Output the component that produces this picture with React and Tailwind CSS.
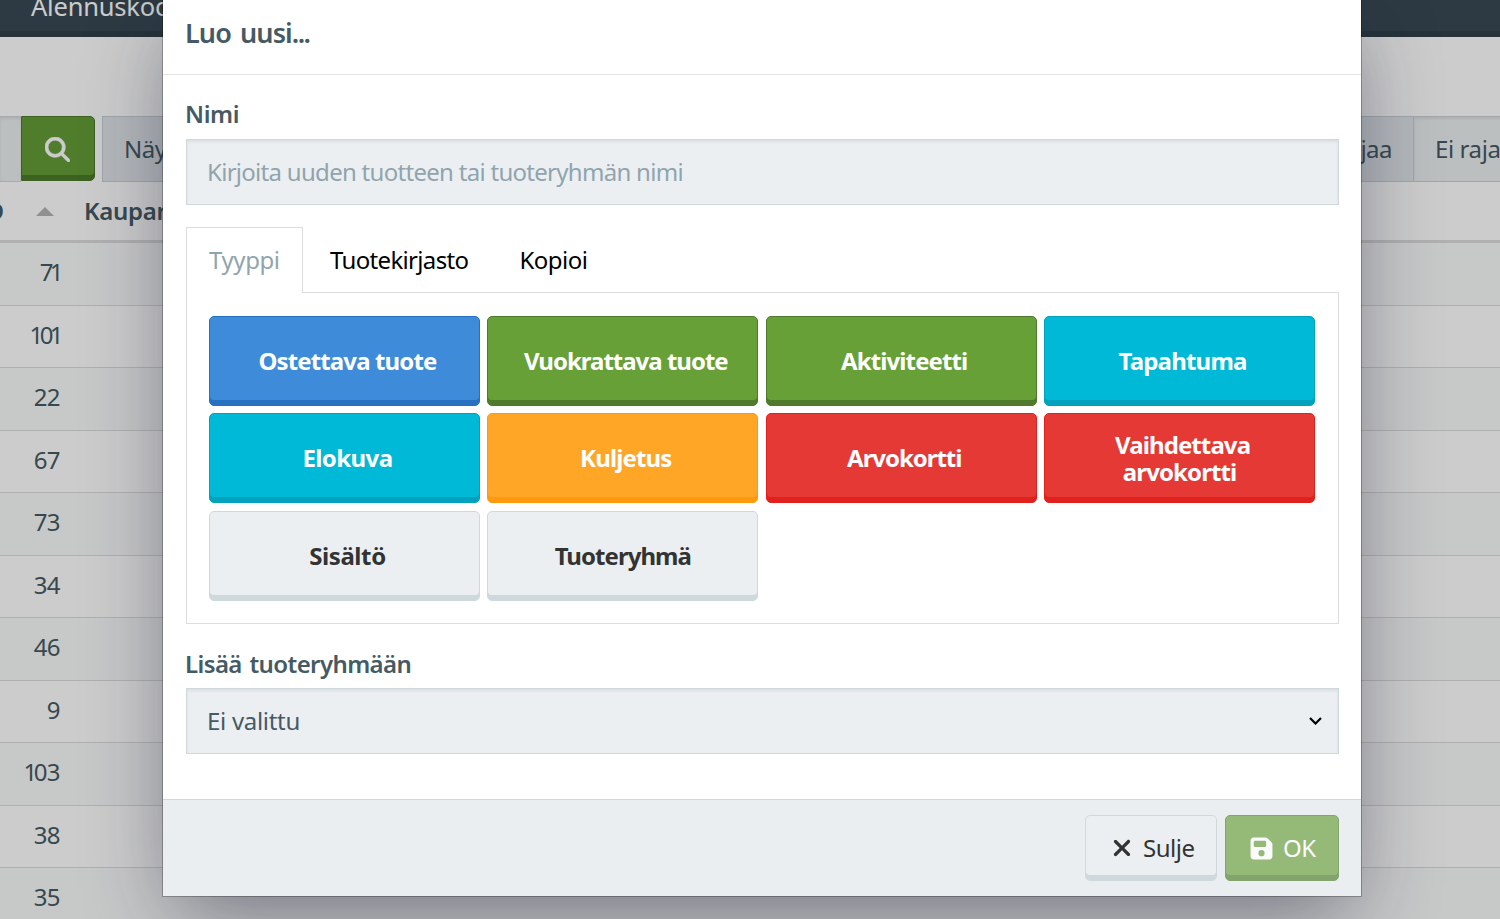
import React from "react";
import { FaMagnifyingGlass, FaFloppyDisk, FaXmark } from "react-icons/fa6";

const rows = [71, 101, 22, 67, 73, 34, 46, 9, 103, 38, 35];

const tones = {
  blue: "bg-[#3d8bd9] border-[#2672c0] shadow-[inset_0_-5px_0_#2672c0] text-white",
  green: "bg-[#68a038] border-[#4f7a2b] shadow-[inset_0_-5px_0_#4f7a2b] text-white",
  cyan: "bg-[#00b9d6] border-[#00a2bd] shadow-[inset_0_-5px_0_#00a2bd] text-white",
  orange: "bg-[#ffa627] border-[#ff9a0e] shadow-[inset_0_-5px_0_#ff9a0e] text-white",
  red: "bg-[#e53935] border-[#e2211c] shadow-[inset_0_-5px_0_#e2211c] text-white",
  plain: "bg-[#eceff1] border-[#cfd8dc] shadow-[inset_0_-5px_0_#cfd8dc] text-[#333]",
};

const types = [
  ["Ostettava tuote", "blue", "tracking-[-0.87px] pl-1.5"],
  ["Vuokrattava tuote", "green", "tracking-[-1px] pl-1.5"],
  ["Aktiviteetti", "green", "tracking-[-0.9px] pl-1.5"],
  ["Tapahtuma", "cyan", "tracking-[-0.8px] pl-1.5"],
  ["Elokuva", "cyan", "tracking-[-0.6px] pl-1.5 pb-0.5"],
  ["Kuljetus", "orange", "tracking-[-0.85px] pl-1.5 pb-0.5"],
  ["Arvokortti", "red", "tracking-[-1.05px] pl-1.5 pb-0.5"],
  ["Vaihdettava arvokortti", "red", "tracking-[-0.9px]"],
  ["Sisältö", "plain", "tracking-[-0.4px] pl-1.5"],
  ["Tuoteryhmä", "plain", "tracking-[-0.95px]"],
];

/* The digit one is set tighter than the other figures. */
function Figure({ value }) {
  return String(value)
    .split("")
    .map((d, i) => (
      <span key={i} className={d !== "1" ? "" : i === 0 ? "-mr-[3px]" : "-ml-[3px] -mr-[3px]"}>
        {d}
      </span>
    ));
}

function Backdrop() {
  return (
    <div className="h-[919px] w-[1500px] overflow-hidden bg-white text-[#455a64]">
      <div className="flex h-[37px] items-start border-b-[6px] border-[#304049] bg-[#394954] pl-[31px] text-[25.5px] leading-[36px] text-white">
        <div className="-mt-3 tracking-[-0.2px]">Alennuskoodit</div>
      </div>
      <div className="mt-[79px] flex h-[66px]">
        <div className="w-[21px] shrink-0 border-y border-[#cfd8dc] bg-[#eceff1] shadow-[inset_0_2px_3px_rgba(0,0,0,0.08)]" />
        <div className="flex h-[65px] w-[74px] shrink-0 items-center justify-center rounded-r-[5px] border border-[#4d7a2a] bg-[#659d37] pr-px pt-0.5 shadow-[inset_0_-5px_0_#4d7a2a]">
          <FaMagnifyingGlass className="size-[25px] text-white" stroke="currentColor" strokeWidth="12" />
        </div>
        <div className="ml-[7px] flex w-[1312px] shrink-0 items-center justify-between border border-[#c7d1d6] bg-[#e2e7ea] pl-[21px] pr-[21px] tracking-[-0.5px]">
          <span>Näytä</span>
          <span>Rajaa</span>
        </div>
        <div className="flex flex-1 items-center whitespace-nowrap border-y border-[#c7d1d6] bg-[#eceff1] pl-[21px] tracking-[-0.4px] shadow-[inset_0_2px_3px_rgba(0,0,0,0.08)]">
          Ei rajausta
        </div>
      </div>
      <div className="flex h-[61px] items-center border-b-[3px] border-[#dcdcdc] font-semibold">
        <div className="flex w-[4px] justify-end">ID</div>
        <svg className="ml-[32px] h-[9px] w-[18px]" viewBox="0 0 18 9">
          <path d="M0 9 9 0l9 9z" fill="#b5b5b5" />
        </svg>
        <div className="ml-[30px] tracking-[-0.3px]">Kaupan nimi</div>
      </div>
      {rows.map((n) => (
        <div
          key={n}
          className="flex h-[62.5px] items-center border-b border-[#dcdcdc] odd:bg-white even:bg-[#f9fafb]"
        >
          <div className="w-[60px] pb-[3px] text-right tracking-[-0.6px]">
            <Figure value={n} />
          </div>
        </div>
      ))}
    </div>
  );
}

function Modal() {
  return (
    <div className="absolute left-[162px] top-[-9px] flex h-[906px] w-[1200px] flex-col border border-black/25 bg-white bg-clip-padding shadow-[0_28px_80px_-12px_rgba(20,25,50,0.48)]">
      <div className="flex h-[83px] items-center border-b border-[#e5e5e5] pl-[22px] text-[27px] font-semibold tracking-[-0.9px] text-[#455a64] [word-spacing:3px]">
        Luo uusi<span className="tracking-[-1.6px]">...</span>
      </div>
      <div className="flex flex-1 flex-col pl-[23px] pr-[22px] text-[#455a64]">
        <label className="-ml-px mt-[23px] leading-8 font-semibold tracking-[-0.4px]">Nimi</label>
        <div className="mt-[9px] flex h-[66px] items-center border border-[#cfd8dc] bg-[#eceff1] pl-[20px] tracking-[-0.71px] text-[#90a4ae] shadow-[inset_0_2px_3px_rgba(0,0,0,0.07)]">
          Kirjoita uuden tuotteen tai tuoteryhmän nimi
        </div>
        <div className="z-10 mt-[22px] -mb-px flex h-[66px] items-center text-black">
          <div className="flex h-full w-[117px] items-center border border-b-0 border-[#ddd] bg-white pb-px pl-[22px] tracking-[-0.4px] text-[#90a4ae]">
            Tyyppi
          </div>
          <div className="pl-[27px] tracking-[-0.66px]">Tuotekirjasto</div>
          <div className="pl-[51px] tracking-[-0.5px]">Kopioi</div>
        </div>
        <div className="h-[332px] border border-[#ddd] pl-[22px] pt-[22.75px]">
          <div className="grid w-[1106px] grid-cols-4 gap-[7.5px]">
            {types.map(([name, tone, fit]) => (
              <div
                key={name}
                className={
                  "flex h-[90px] flex-col items-center justify-center rounded-[5px] border text-center leading-[27px] font-bold " +
                  tones[tone] + " " + fit
                }
              >
                {name === "Vaihdettava arvokortti" ? (
                  <>
                    <span className="pl-1.5">Vaihdettava </span>
                    <span>arvokortti</span>
                  </>
                ) : (
                  name
                )}
              </div>
            ))}
          </div>
        </div>
        <label className="-ml-px mt-[24px] leading-8 font-semibold tracking-[-0.6px] [word-spacing:2px]">Lisää tuoteryhmään</label>
        <div className="mt-[8px] flex h-[66px] items-center justify-between border border-[#cfd8dc] bg-[#eceff1] pl-[20px] pr-[16px] tracking-[-0.3px] shadow-[inset_0_2px_3px_rgba(0,0,0,0.07)]">
          Ei valittu
          <svg className="h-2 w-[13px]" viewBox="0 0 13 8" fill="none" stroke="#000" strokeWidth="2.2">
            <path d="m1 1 5.500 5.500L12 1" />
          </svg>
        </div>
      </div>
      <div className="flex h-[97px] justify-end gap-2 border-t border-[#cfd8dc] bg-[#eaeef1] pr-[22px] pt-[15px]">
        <div className="flex h-[66px] w-[132px] items-center rounded-[5px] border border-[#cfd8dc] bg-[#eceff1] pl-[23px] tracking-[-0.5px] text-[#333] shadow-[inset_0_-5px_0_#cfd8dc]">
          <FaXmark className="mr-[8px] size-[26px]" />
          Sulje
        </div>
        <div className="flex h-[66px] w-[114px] items-center rounded-[5px] border border-[#84a46e] bg-[#95ba78] pl-[23px] tracking-[-0.5px] text-[#fafbfc] shadow-[inset_0_-5px_0_#84a46e]">
          <FaFloppyDisk className="mr-[9px] size-[25px]" />
          OK
        </div>
      </div>
    </div>
  );
}

export default function App() {
  return (
    <div className="relative h-[919px] w-[1500px] overflow-hidden font-['Noto_Sans','Open_Sans',sans-serif] text-[24px]">
      <Backdrop />
      <div className="absolute inset-0 bg-black/20" />
      <Modal />
    </div>
  );
}
